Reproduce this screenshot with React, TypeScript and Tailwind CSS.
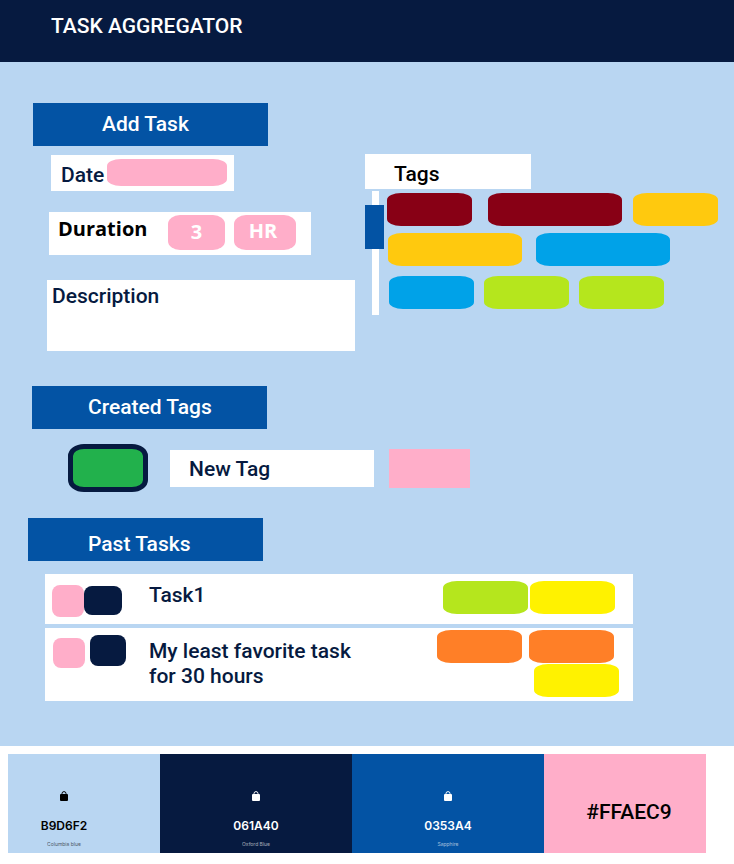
import type { ReactNode } from "react";

const ui = "font-['Roboto','Noto_Sans',sans-serif]";
const pill = "rounded-[14px/7px]";

function SectionTitle({ className, children }: { className: string; children: ReactNode }) {
  return (
    <h2 className={`flex h-[43px] w-[235px] items-center bg-[#0353a4] text-[21px] leading-6 font-medium text-white ${className}`}>
      {children}
    </h2>
  );
}

function Tag({ className }: { className: string }) {
  return <span className={`block h-[33px] shrink-0 ${pill} ${className}`} />;
}

function LockIcon() {
  return (
    <svg viewBox="0 0 8 10" className="h-[10px] w-2" fill="none" aria-hidden="true">
      <path d="M2 4V2.6a2 2 0 0 1 4 0V4" stroke="currentColor" strokeWidth="1" />
      <rect x="0" y="3" width="8" height="7" rx="1" fill="currentColor" />
    </svg>
  );
}

function Swatch({ hex, name, className }: { hex: string; name: string; className: string }) {
  return (
    <li className={`flex flex-col items-center pt-[37px] font-['Inter',sans-serif] ${className}`}>
      <LockIcon />
      <span className="mt-[17px] text-[12px] leading-4 font-semibold">{hex}</span>
      <span className="mt-[6px] text-[5px] leading-2 opacity-60">{name}</span>
    </li>
  );
}

export default function App() {
  return (
    <div className={`min-h-screen bg-white ${ui} text-[#061a40]`}>
      <header className="h-[62px] bg-[#061a40] pt-[14px] pl-[51px]">
        <h1 className="text-[21px] leading-6 font-medium text-white">TASK AGGREGATOR</h1>
      </header>

      <main className="bg-[#b9d6f2] pt-[41px] pb-[45px]">
        <section className="flex items-start">
          <form className="w-[365px] shrink-0" onSubmit={(e) => e.preventDefault()}>
            <SectionTitle className="ml-[33px] pb-[2px] pl-[69px]">Add Task</SectionTitle>

            <div className="mt-[9px] ml-[51px] flex h-9 w-[183px] items-center justify-between bg-white pr-[7px] pb-[2px] pl-[10px]">
              <label htmlFor="date" className="pt-[6px] text-[21px] leading-6 font-medium">
                Date
              </label>
              <input id="date" type="text" className={`h-[27px] w-[120px] bg-[#ffaec9] px-3 text-white outline-none ${pill}`} />
            </div>

            <div className="mt-[21px] ml-[49px] flex h-[43px] w-[262px] items-start bg-white pt-[3px] pr-[15px] pl-[9px] font-['Open_Sans','Noto_Sans',sans-serif] text-[20px] font-bold">
              <label htmlFor="duration" className="mr-auto pt-[2px] leading-6 text-black">
                Duration
              </label>
              <input
                id="duration"
                type="text"
                defaultValue="3"
                className="mr-[9px] h-[35px] w-[57px] rounded-[12px/9px] bg-[#ffaec9] pb-[3px] text-center text-white outline-none"
              />
              <select
                aria-label="Duration unit"
                defaultValue="HR"
                className="h-[35px] w-[62px] appearance-none rounded-[12px/9px] bg-[#ffaec9] pr-1 pb-[3px] text-center text-white outline-none"
              >
                <option>HR</option>
                <option>MIN</option>
              </select>
            </div>

            <div className="mt-[25px] ml-[47px] flex h-[71px] w-[308px] flex-col bg-white px-[5px] pt-1">
              <label htmlFor="description" className="text-[21px] leading-6 font-medium">
                Description
              </label>
              <textarea id="description" className="w-full flex-1 resize-none text-sm outline-none" />
            </div>
          </form>

          <div className="min-w-0 flex-1 pt-[51px]">
            <h3 className="h-[35px] w-[166px] bg-white pt-2 pl-[29px] text-[21px] leading-6 font-medium text-black">
              Tags
            </h3>
            <div className="mt-[2px] flex items-start">
              <input
                type="range"
                aria-label="Scroll tags"
                min={0}
                max={80}
                defaultValue={14}
                className="m-0 h-[124px] w-[19px] shrink-0 appearance-none bg-[linear-gradient(white,white)] bg-[length:7px_100%] bg-[position:7px_0] bg-no-repeat [writing-mode:vertical-lr] [&::-webkit-slider-thumb]:h-[44px] [&::-webkit-slider-thumb]:w-[19px] [&::-webkit-slider-thumb]:appearance-none [&::-webkit-slider-thumb]:bg-[#0353a4]"
              />
              <div className="ml-[3px] flex flex-col pt-[2px]">
                <div className="flex">
                  <Tag className="mr-4 w-[85px] bg-[#880015]" />
                  <Tag className="mr-[11px] w-[134px] bg-[#880015]" />
                  <Tag className="w-[85px] bg-[#ffc90e]" />
                </div>
                <div className="mt-[7px] ml-px flex gap-[14px]">
                  <Tag className="w-[134px] bg-[#ffc90e]" />
                  <Tag className="w-[134px] bg-[#00a2e8]" />
                </div>
                <div className="mt-[10px] ml-[2px] flex gap-[10px]">
                  <Tag className="w-[85px] bg-[#00a2e8]" />
                  <Tag className="w-[85px] bg-[#b5e61d]" />
                  <Tag className="w-[85px] bg-[#b5e61d]" />
                </div>
              </div>
            </div>
          </div>
        </section>

        <section className="mt-[35px]">
          <SectionTitle className="ml-8 pb-[2px] pl-14">Created Tags</SectionTitle>
          <div className="mt-[15px] ml-[68px] flex h-12 items-center">
            <button
              type="button"
              aria-label="Tag colour"
              className="h-12 w-20 rounded-[16px/12px] border-[5px] border-[#061a40] bg-[#22b14c]"
            />
            <input
              type="text"
              aria-label="Tag name"
              defaultValue="New Tag"
              className="ml-[22px] h-[37px] w-[204px] bg-white pt-[2px] pl-[19px] text-[21px] font-medium outline-none"
            />
            <button type="button" aria-label="Save tag" className="ml-[15px] h-[39px] w-[81px] bg-[#ffaec9]" />
          </div>
        </section>

        <section className="mt-[26px]">
          <SectionTitle className="ml-7 pt-2 pl-[60px]">Past Tasks</SectionTitle>
          <ul className="mt-[13px] mr-[101px] ml-[45px] flex flex-col gap-1 text-[21px] leading-[25px] font-medium">
            <li className="flex h-[50px] items-start bg-white pt-[7px] pr-[18px] pl-[7px]">
              <button type="button" aria-label="Edit Task1" className="mt-1 h-8 w-8 rounded-lg bg-[#ffaec9]" />
              <button type="button" aria-label="Delete Task1" className="mt-[5px] h-[29px] w-[38px] rounded-lg bg-[#061a40]" />
              <p className="mt-[2px] ml-[27px] flex-1">Task1</p>
              <div className="flex gap-[2px]">
                <Tag className="w-[85px] bg-[#b5e61d]" />
                <Tag className="w-[85px] bg-[#fff200]" />
              </div>
            </li>
            <li className="flex h-[73px] items-start bg-white pt-[2px] pr-[14px] pl-2">
              <button type="button" aria-label="Edit My least favorite task" className="mt-2 h-[30px] w-8 rounded-lg bg-[#ffaec9]" />
              <button
                type="button"
                aria-label="Delete My least favorite task"
                className="mt-[5px] ml-[5px] h-[31px] w-9 rounded-lg bg-[#061a40]"
              />
              <p className="mt-[9px] ml-[23px] w-[210px]">My least favorite task for 30 hours</p>
              <div className="ml-auto flex w-[182px] flex-wrap justify-end gap-x-[7px] gap-y-[1px]">
                <Tag className="w-[85px] bg-[#ff7f27]" />
                <Tag className="mr-[5px] w-[85px] bg-[#ff7f27]" />
                <Tag className="w-[85px] bg-[#fff200]" />
              </div>
            </li>
          </ul>
        </section>
      </main>

      <footer className="pt-2 pr-7 pb-[11px] pl-2">
        <ul className="grid h-[99px] grid-cols-[152fr_192fr_192fr_162fr]">
          <Swatch hex="B9D6F2" name="Columbia blue" className="bg-[#b9d6f2] pr-10 text-black" />
          <Swatch hex="061A40" name="Oxford Blue" className="bg-[#061a40] text-white" />
          <Swatch hex="0353A4" name="Sapphire" className="bg-[#0353a4] text-white" />
          <li className="flex items-center justify-center bg-[#ffaec9] pt-4 pl-2 text-[21px] leading-6 font-medium text-black">
            #FFAEC9
          </li>
        </ul>
      </footer>
    </div>
  );
}
